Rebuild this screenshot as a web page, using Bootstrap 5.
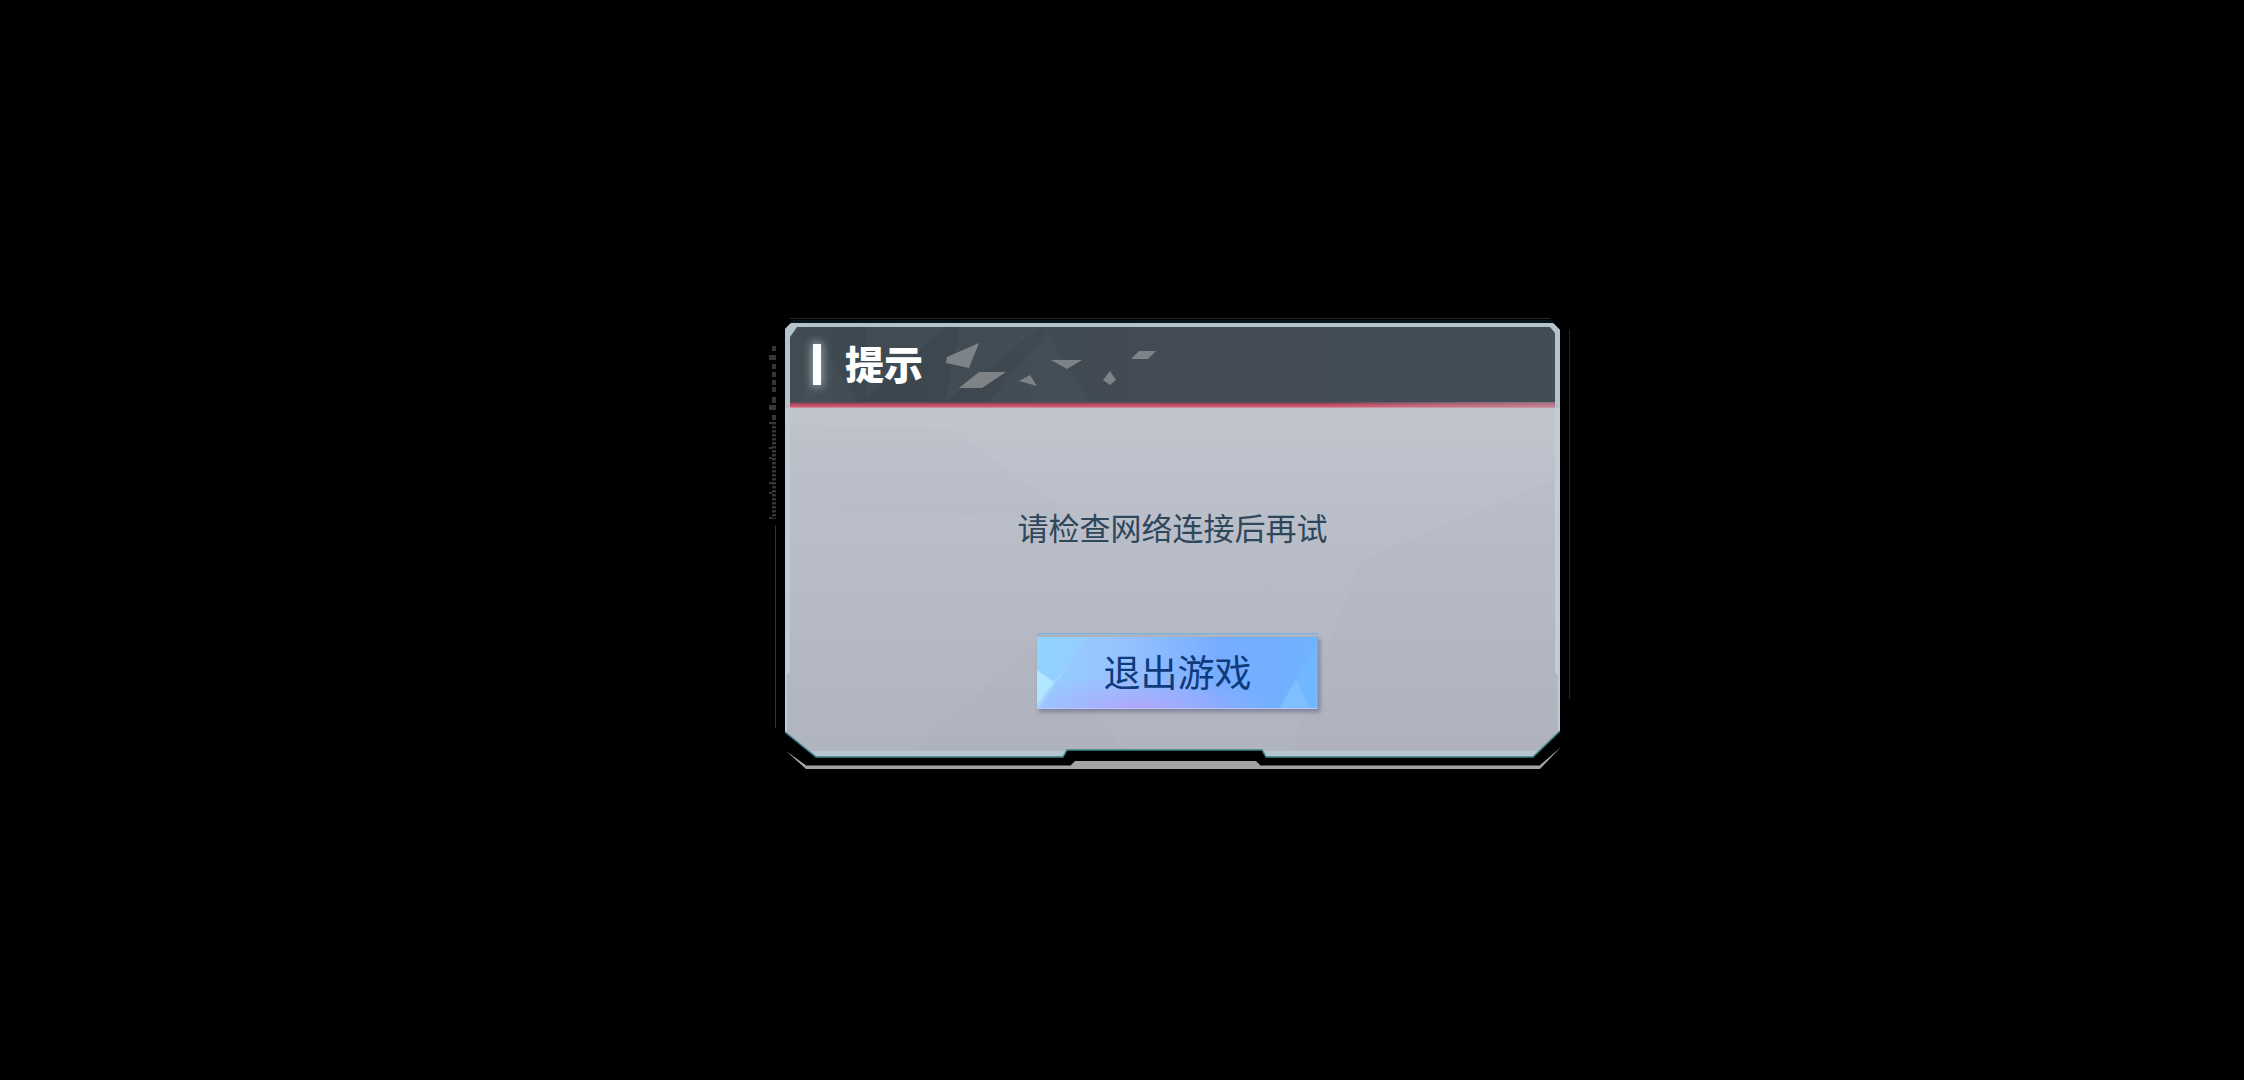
<!DOCTYPE html>
<html lang="zh-CN">
<head>
<meta charset="utf-8">
<meta name="viewport" content="width=device-width, initial-scale=1">
<title>提示</title>
<link href="https://cdn.jsdelivr.net/npm/bootstrap@5.3.0/dist/css/bootstrap.min.css" rel="stylesheet">
<style>
body{background:#000;font-family:"Noto Sans CJK SC",sans-serif}
.stage{padding:8px 0 0 94px}
.panel-frame{width:802px;max-width:100%;padding:9px 15px 13px 22px}
.frame-art,.button-art{inset:0;width:100%;height:100%}
.panel-head{height:75px;padding-left:23px;gap:24px}
.head-bar{width:8px;height:41px;background:#fff;box-shadow:0 0 8px 2px rgba(220,235,240,.5)}
.head-title{font-size:39px;line-height:48px;font-weight:900;color:#fff;padding-bottom:6px}
.panel-message{font-size:31px;line-height:40px;color:#2e475a;margin:105px 0 86px}
.exit-wrap{padding-left:10px}
.btn-exit{width:281px;height:76px;padding:0;border:0;border-radius:0;font-size:37px;line-height:72px;color:#0f3a7c}
.btn-exit:hover,.btn-exit:active{color:#0f3a7c!important}
.panel-body{padding-bottom:48px;margin-top:6px}
</style>
</head>
<body>
<main class="stage min-vh-100 d-flex justify-content-center align-items-center">
<section class="panel-frame position-relative" role="dialog" aria-labelledby="dlg-title">
<svg class="frame-art position-absolute" viewBox="768 318 802 452" preserveAspectRatio="none" aria-hidden="true">
<defs>
<linearGradient id="bodyFill" x1="0" y1="0" x2="0" y2="1"><stop offset="0" stop-color="#c6cad1"/><stop offset=".5" stop-color="#b9bdc8"/><stop offset="1" stop-color="#b0b4be"/></linearGradient>
<linearGradient id="headFill"><stop offset="0" stop-color="#414c55"/><stop offset=".12" stop-color="#3c464f"/><stop offset=".5" stop-color="#434c55"/><stop offset="1" stop-color="#434d55"/></linearGradient>
<linearGradient id="redFill" x1="0" y1="0" x2="0" y2="1"><stop offset="0" stop-color="#5b4558"/><stop offset=".45" stop-color="#bf4b62"/><stop offset=".75" stop-color="#cb5a70"/><stop offset="1" stop-color="#d0a5b0"/></linearGradient>
<linearGradient id="redFade"><stop offset=".7" stop-color="#b8bcc5" stop-opacity="0"/><stop offset="1" stop-color="#b8a5b0" stop-opacity=".5"/></linearGradient>
</defs>
<path d="M790 318.500H1550" stroke="#24292c"/>
<path d="M792 321.500H1552" stroke="#06151d" stroke-width="3"/>
<path d="M785 329L791 323H1553L1560 330V731L1533 757H1266L1262 750H1067L1063 757H816L785 732Z" fill="url(#bodyFill)"/>
<path d="M785 329L791 323H1553L1560 330V408H1555V333L1550 327H797L790 337V408H785Z" fill="#b4c3cb"/>
<path d="M785 408H790V672L787 675V732H785ZM1560 408H1555V672L1558 675V731H1560Z" fill="#bfcdd6"/>
<path d="M790 337L797 327H1550L1555 333V402H790Z" fill="url(#headFill)"/>
<g fill="#56636c" opacity=".18"><path d="M867 327H945L867 397Z"/><path d="M960 327H1040L945 402Z"/><path d="M1047 332L1090 402H989Z"/><path d="M825 350L858 402H800Z"/></g>
<path d="M790 402H1555V408H790Z" fill="url(#redFill)"/><path d="M790 402H1555V408H790Z" fill="url(#redFade)"/>
<g fill="#9a9fa8" opacity=".05"><path d="M912 750L1040 640L1125 750Z"/><path d="M790 425L950 430L1080 520L790 510Z"/><path d="M1555 480L1360 560L1290 750H1538L1555 735Z"/></g>
<path d="M812 751H1065L1063 756H816ZM1264 751H1538L1533 756H1266Z" fill="#b5c6d1"/>
<path d="M785 732L816 757H1063L1067 750H1262L1266 757H1533L1560 731" fill="none" stroke="#3a8288" stroke-width="1.500"/>
<path d="M786 751L807 766H1070L1075 761H1256L1261 766H1539L1561 747L1540 769H806Z" fill="#a3a3a3"/>
<path d="M807 765.500H1070M1261 765.500H1539" stroke="#555"/>
<path d="M775.500 525V728" stroke="#303336"/><path d="M1569.500 330V699" stroke="#25282a"/>
<g fill="#343637"><path d="M772 346h4v5h-4zM769 355h7v5h-7zM772 364h4v5h-4zM772 372h4v5h-4zM772 380h4v5h-4zM772 387h4v5h-4zM772 397h4v6h-4zM769 405h7v5h-7zM772 415h4v5h-4z"/>
<path d="M774 422V519" stroke="#343637" stroke-width="4" stroke-dasharray="2.500 1.500"/><path d="M769 422h3v2h-3zM769 447h3v2h-3zM769 457h3v2h-3zM769 482h3v2h-3zM769 492h3v2h-3zM769 517h3v2h-3z"/></g>
<g fill="#7e8387"><path d="M947 357L979 343L969 368L946 363Z"/><path d="M979 372H1006L982 388H959Z"/><path d="M1019 381L1030 375L1037 386Z"/><path d="M1051 360H1082L1067 369Z"/><path d="M1110 371L1116 380L1110 385L1103 380Z"/><path d="M1139 351H1156L1148 359H1131Z"/></g>
</svg>
<header class="panel-head position-relative d-flex align-items-center"><span class="head-bar"></span><h1 class="head-title m-0" id="dlg-title">提示</h1></header>
<div class="panel-body position-relative text-center">
<p class="panel-message">请检查网络连接后再试</p>
<div class="exit-wrap">
<button type="button" class="btn btn-exit position-relative">
<svg class="button-art position-absolute overflow-visible" viewBox="0 0 281 76" preserveAspectRatio="none" aria-hidden="true">
<defs><linearGradient id="btnFill"><stop offset="0" stop-color="#95d0ff"/><stop offset=".3" stop-color="#98c2ff"/><stop offset=".65" stop-color="#76acff"/><stop offset="1" stop-color="#6fb3ff"/></linearGradient>
<radialGradient id="violet" cx=".36" cy="1" r=".5"><stop offset="0" stop-color="#b3a2fb" stop-opacity=".9"/><stop offset="1" stop-color="#a5b0ff" stop-opacity="0"/></radialGradient>
<filter id="soft" x="-5%" y="-20%" width="110%" height="150%"><feGaussianBlur stdDeviation="2"/></filter></defs>
<path d="M2 6H283V79H2Z" fill="#6a6e8b" opacity=".75" filter="url(#soft)"/>
<path d="M0 0H281V4H0Z" fill="#a9b4c3"/><path d="M0 .500H281" stroke="#76b3dc"/>
<path d="M0 4H281V76H0Z" fill="url(#btnFill)"/><path d="M0 4H281V76H0Z" fill="url(#violet)"/>
<path d="M0 4H52L17 49L0 37Z" fill="#8fd6ff" opacity=".4"/><path d="M0 37L17 49L0 72Z" fill="#b0e6ff"/><path d="M17 49L32 30L4 72L0 76V72Z" fill="#b0dcff" opacity=".6"/>
<path d="M281 10V76H242Z" fill="#70bdff" opacity=".5"/><path d="M259 46L273 76H242Z" fill="#86c0ff" opacity=".7"/>
<path d="M0 75.500H281" stroke="#c0c4f7"/><path d="M280.500 4V76" stroke="#7fa8df"/>
</svg><span class="position-relative">退出游戏</span></button>
</div></div>
</section>
</main>
<script src="https://cdn.jsdelivr.net/npm/bootstrap@5.3.0/dist/js/bootstrap.bundle.min.js"></script>
</body>
</html>
